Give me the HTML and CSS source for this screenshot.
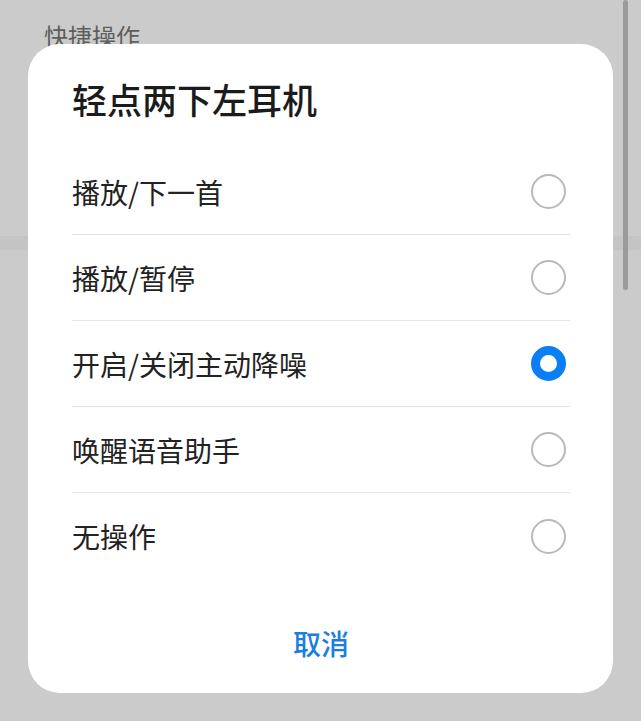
FILE: index.html
```html
<!DOCTYPE html>
<html lang="zh">
<head>
<meta charset="utf-8">
<link rel="stylesheet" href="styles.css">
</head>
<body>
<div class="page">
  <div class="section-title">快捷操作</div>
  <div class="under-gap"></div>
  <div class="under-band"></div>
</div>
<div class="scrollbar"></div>
<div class="dialog">
  <div class="dialog-title">轻点两下左耳机</div>
  <ul class="options">
    <li class="option"><span class="label">播放/下一首</span><span class="radio"></span></li>
    <li class="option"><span class="label">播放/暂停</span><span class="radio"></span></li>
    <li class="option"><span class="label">开启/关闭主动降噪</span><span class="radio checked"></span></li>
    <li class="option"><span class="label">唤醒语音助手</span><span class="radio"></span></li>
    <li class="option"><span class="label">无操作</span><span class="radio"></span></li>
  </ul>
  <div class="actions"><span class="cancel">取消</span></div>
</div>
</body>
</html>
```
FILE: styles.css
```css
html, body {
  margin: 0;
  padding: 0;
  width: 641px;
  height: 721px;
  overflow: hidden;
  background: #cbcbcb;
  font-family: "Noto Sans CJK SC", "Noto Sans", sans-serif;
}
.page {
  padding-top: 20px;
}
.section-title {
  padding-left: 44px;
  font-size: 24px;
  line-height: 32px;
  color: #5e5e5e;
}
.under-gap {
  height: 184px;
}
.under-band {
  height: 14px;
  background: #c4c4c4;
}
.scrollbar {
  position: absolute;
  left: 623px;
  top: 0;
  width: 5px;
  height: 290px;
  border-radius: 3px;
  background: #9b9b9b;
}
.dialog {
  position: absolute;
  left: 28px;
  top: 44px;
  width: 585px;
  height: 649px;
  box-sizing: border-box;
  padding: 33px 43px 0 44px;
  background: #fff;
  border-radius: 32px;
  display: flex;
  flex-direction: column;
}
.dialog-title {
  font-size: 35px;
  line-height: 44px;
  font-weight: 500;
  color: #1b1b1b;
  margin-bottom: 28px;
}
.options {
  list-style: none;
  margin: 0;
  padding: 0;
}
.option {
  height: 86px;
  box-sizing: border-box;
  display: flex;
  align-items: center;
  justify-content: space-between;
  border-bottom: 1px solid #e3e3e3;
}
.option:last-child {
  border-bottom: none;
}
.label {
  font-size: 28px;
  color: #222;
}
.radio {
  width: 35px;
  height: 35px;
  box-sizing: border-box;
  border: 2px solid #b9b9b9;
  border-radius: 50%;
  margin-right: 4px;
}
.radio.checked {
  border: 9px solid #0a7ff5;
}
.actions {
  margin-top: 44px;
  display: flex;
  justify-content: center;
}
.cancel {
  font-size: 28px;
  line-height: 40px;
  font-weight: 500;
  color: #1a7fe0;
}
```
